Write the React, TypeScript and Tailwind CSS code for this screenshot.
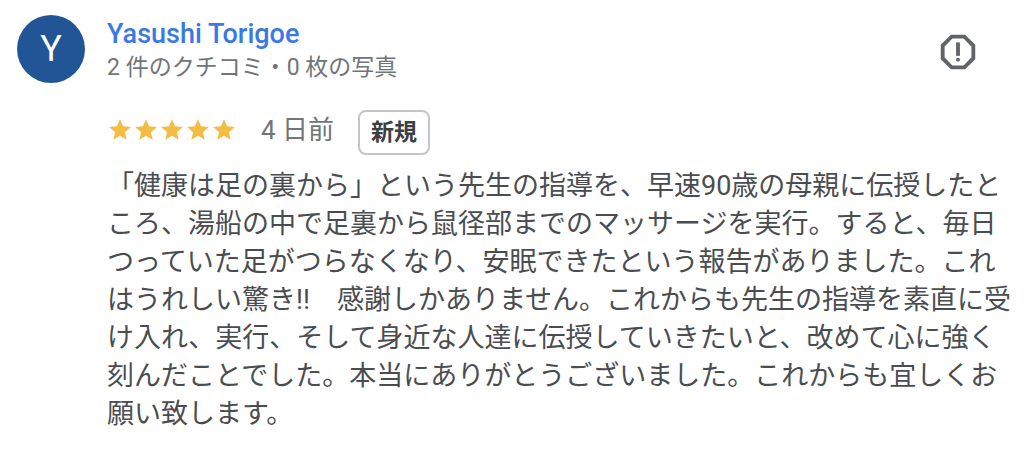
const review = {
  author: 'Yasushi Torigoe',
  initial: 'Y',
  meta: '2 件のクチコミ・0 枚の写真',
  rating: 5,
  date: '4 日前',
  text: '「健康は足の裏から」という先生の指導を、早速90歳の母親に伝授したところ、湯船の中で足裏から鼠径部までのマッサージを実行。すると、毎日つっていた足がつらなくなり、安眠できたという報告がありました。これはうれしい驚き!!　感謝しかありません。これからも先生の指導を素直に受け入れ、実行、そして身近な人達に伝授していきたいと、改めて心に強く刻んだことでした。本当にありがとうございました。これからも宜しくお願い致します。',
}

function StarIcon() {
  return (
    <svg viewBox="0 0 24 24" className="size-[26px] fill-[#f2bd42]" aria-hidden="true">
      <path d="M12 17.27 18.18 21l-1.64-7.03L22 9.24l-7.19-.61L12 2 9.19 8.63 2 9.24l5.46 4.73L5.82 21z" />
    </svg>
  )
}

function ReportIcon() {
  return (
    <svg viewBox="0 0 24 24" className="size-[46px] fill-[#616467]" aria-hidden="true">
      <path d="M15.73 3H8.27L3 8.27v7.46L8.27 21h7.46L21 15.73V8.27L15.73 3zM19 14.9 14.9 19H9.1L5 14.9V9.1L9.1 5h5.8L19 9.1v5.8z" />
      <circle cx="12" cy="16" r="1" />
      <path d="M11 7h2v7h-2z" />
    </svg>
  )
}

export default function App() {
  return (
    <main lang="ja" className="min-h-screen bg-white font-[Roboto,'Noto_Sans_CJK_JP',sans-serif]">
      <article className="flex gap-[22px] pt-[15px] pb-8 pl-[17px]">

        {/* Avatar */}
        <div className="flex size-[68px] shrink-0 items-center justify-center rounded-full bg-[#225595] text-[36px] leading-none text-white">
          {review.initial}
        </div>

        <div className="min-w-0 flex-1 pr-2">

          {/* Author */}
          <header className="flex items-start justify-between pr-[35px]">
            <div className="pt-1">
              <a href="#" className="block text-[27px] leading-[30px] font-medium text-[#3b78e7]">
                {review.author}
              </a>
              <p className="text-[23px] leading-[38px] text-[#70757a]">{review.meta}</p>
            </div>
            <button type="button" aria-label="クチコミを報告" className="mt-[14px]">
              <ReportIcon />
            </button>
          </header>

          {/* Rating, date, badge */}
          <div className="mt-[23px] flex items-start">
            <div className="flex h-10 items-center gap-6">
              <div className="flex" role="img" aria-label="5 つ星">
                {Array.from({ length: review.rating }, (_, i) => (
                  <StarIcon key={i} />
                ))}
              </div>
              <span className="text-[26px] leading-[38px] text-[#70757a]">{review.date}</span>
            </div>
            <span className="ml-6 flex h-[45px] w-[72px] items-center justify-center rounded-lg border-2 border-[#c4c5c7] text-[23px] leading-none font-bold text-[#3c4043]">
              新規
            </span>
          </div>

          {/* Review body */}
          <p className="mt-3 text-[27px] leading-[38px] text-[#4a4d50]">{review.text}</p>
        </div>
      </article>
    </main>
  )
}
